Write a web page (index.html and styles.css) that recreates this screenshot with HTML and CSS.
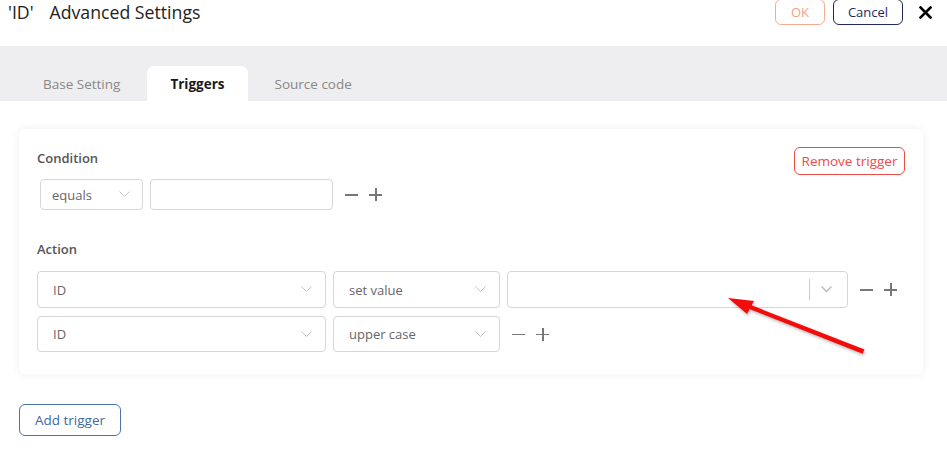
FILE: index.html
```html
<!DOCTYPE html>
<html>
<head>
<meta charset="utf-8">
<link rel="stylesheet" href="styles.css">
</head>
<body>
<header class="header">
  <h1 class="title"><span class="title-id">'ID'</span><span>Advanced Settings</span></h1>
  <div class="header-actions">
    <button class="btn btn-ok">OK</button>
    <button class="btn btn-cancel">Cancel</button>
    <button class="close" aria-label="close">
      <svg width="13" height="13" viewBox="0 0 13 13"><path d="M1.5 1.5 L11.5 11.5 M11.5 1.5 L1.5 11.5" stroke="#000" stroke-width="2.6" stroke-linecap="square"/></svg>
    </button>
  </div>
</header>
<nav class="tabs">
  <div class="tab">Base Setting</div>
  <div class="tab active">Triggers</div>
  <div class="tab">Source code</div>
</nav>
<main class="content">
  <section class="card">
    <div class="card-head">
      <div class="label">Condition</div>
      <button class="btn btn-remove">Remove trigger</button>
    </div>
    <div class="row cond-row">
      <div class="select sel-cond"><span>equals</span><svg class="chev" width="11" height="7" viewBox="0 0 11 7"><path d="M0.5 0.5 L5.5 5.5 L10.5 0.5" fill="none" stroke="#c4c4c4" stroke-width="1"/></svg></div>
      <div class="input inp-cond"></div>
      <div class="pm"><span class="minus"></span><span class="plus"></span></div>
    </div>
    <div class="label action-label">Action</div>
    <div class="rows">
      <div class="row act-row">
        <div class="select sel-field"><span>ID</span><svg class="chev" width="11" height="7" viewBox="0 0 11 7"><path d="M0.5 0.5 L5.5 5.5 L10.5 0.5" fill="none" stroke="#c4c4c4" stroke-width="1"/></svg></div>
        <div class="select sel-op"><span>set value</span><svg class="chev" width="11" height="7" viewBox="0 0 11 7"><path d="M0.5 0.5 L5.5 5.5 L10.5 0.5" fill="none" stroke="#c4c4c4" stroke-width="1"/></svg></div>
        <div class="select sel-value"><span></span><span class="divider"></span><svg class="chev" width="11" height="7" viewBox="0 0 11 7"><path d="M0.5 0.5 L5.5 5.5 L10.5 0.5" fill="none" stroke="#bdbdbd" stroke-width="1.5"/></svg></div>
        <div class="pm"><span class="minus"></span><span class="plus"></span></div>
      </div>
      <div class="row act-row">
        <div class="select sel-field"><span>ID</span><svg class="chev" width="11" height="7" viewBox="0 0 11 7"><path d="M0.5 0.5 L5.5 5.5 L10.5 0.5" fill="none" stroke="#c4c4c4" stroke-width="1"/></svg></div>
        <div class="select sel-op"><span>upper case</span><svg class="chev" width="11" height="7" viewBox="0 0 11 7"><path d="M0.5 0.5 L5.5 5.5 L10.5 0.5" fill="none" stroke="#c4c4c4" stroke-width="1"/></svg></div>
        <div class="pm"><span class="minus"></span><span class="plus"></span></div>
      </div>
    </div>
  </section>
  <button class="btn btn-add">Add trigger</button>
</main>
<svg class="arrow" width="947" height="455" viewBox="0 0 947 455">
  <defs>
    <filter id="sh" x="-20%" y="-20%" width="140%" height="140%">
      <feDropShadow dx="1" dy="2" stdDeviation="1.5" flood-color="#000" flood-opacity="0.25"/>
    </filter>
  </defs>
  <g filter="url(#sh)" fill="#f20f0f" stroke="none">
    <path d="M864.5 349.5 L747 303.5 L745.5 307.5 L862.5 353.8 Z"/>
    <path d="M728 298 L754 301 L747 314 Z"/>
  </g>
</svg>
</body>
</html>
```
FILE: styles.css
```css
* { box-sizing: border-box; }
html, body { margin: 0; padding: 0; }
body {
  width: 947px;
  height: 455px;
  overflow: hidden;
  background: #fff;
  font-family: "Open Sans", "Noto Sans", sans-serif;
  color: #333;
  position: relative;
}
button { font-family: inherit; cursor: pointer; background: #fff; }

.header {
  height: 46px;
  display: flex;
  justify-content: space-between;
  align-items: flex-start;
  padding: 0 15px 0 8px;
}
.title {
  margin: 0;
  font-size: 17.7px;
  font-weight: 400;
  color: #222;
  line-height: 24px;
  display: flex;
  gap: 16px;
}
.header-actions {
  display: flex;
  align-items: center;
  gap: 8px;
  margin-top: -1px;
}
.btn {
  border: 1px solid;
  border-radius: 6px;
  font-size: 13px;
  padding: 0;
}
.btn-ok {
  width: 50px; height: 26px;
  border-color: #f8ab90;
  color: #f7a084;
}
.btn-cancel {
  width: 70px; height: 26px;
  border-color: #1e2a5c;
  color: #1e2a5c;
}
.close {
  border: 0;
  padding: 0;
  margin-left: 7px;
  width: 14px; height: 14px;
  display: flex; align-items: center; justify-content: center;
}

.tabs {
  height: 55px;
  background: #eeeef0;
  display: flex;
  align-items: flex-end;
  padding-left: 18px;
  gap: 2px;
}
.tab {
  height: 35px;
  padding: 0 25px;
  display: flex;
  align-items: center;
  font-size: 13.5px;
  color: #888;
  border-radius: 7px 7px 0 0;
}
.tab.active {
  background: #fff;
  color: #1a1a1a;
  font-weight: 700;
  padding: 0 23px;
}

.content {
  padding: 28px 24px 0 19px;
}
.card {
  background: #fff;
  border-radius: 6px;
  box-shadow: 0 0 10px rgba(0,0,0,0.07);
  padding: 18px 18px 22px 18px;
}
.card-head {
  display: flex;
  justify-content: space-between;
  align-items: flex-start;
}
.label {
  font-size: 13px;
  font-weight: 600;
  color: #555;
  line-height: 18px;
  padding-top: 2px;
}
.btn-remove {
  height: 28px;
  width: 111px;
  border-color: #ef4b45;
  color: #ef4b45;
  font-size: 13.5px;
}
.row {
  display: flex;
  align-items: center;
  gap: 7px;
}
.cond-row {
  margin-top: 4px;
  padding-left: 3px;
}
.select, .input {
  border: 1px solid #d6d6d6;
  border-radius: 4px;
  background: #fff;
  display: flex;
  align-items: center;
  font-size: 13px;
  color: #666;
}
.select { justify-content: space-between; }
.sel-cond {
  width: 103px; height: 31px;
  padding: 0 12px 0 11px;
}
.inp-cond { width: 183px; height: 31px; }
.pm {
  display: flex;
  align-items: center;
  gap: 11px;
  margin-left: 5px;
}
.minus, .plus {
  width: 13px; height: 13px;
  position: relative;
  display: block;
}
.minus::before, .plus::before, .plus::after {
  content: "";
  position: absolute;
  background: #777;
}
.minus::before, .plus::before {
  left: 0; right: 0; top: 6px; height: 1.5px;
}
.plus::after {
  top: 0; bottom: 0; left: 6px; width: 1.5px;
}
.action-label {
  margin-top: 28px;
}
.rows {
  margin-top: 13px;
  display: flex;
  flex-direction: column;
  gap: 8px;
}
.act-row .select { height: 37px; }
.act-row + .act-row .select { height: 36px; }
.sel-field { width: 289px; padding: 0 13px 0 15px; }
.sel-op { width: 167px; padding: 0 13px 0 15px; }
.sel-value { width: 341px; padding: 0 15px 0 15px; justify-content: flex-end; gap: 0; }
.sel-value .divider {
  width: 1px; height: 21px;
  background: #ccc;
  margin-right: 11px;
}
.sel-value span:first-child { flex: 1; }

.btn-add {
  margin-top: 30px;
  width: 102px; height: 32px;
  border-color: #4a74a6;
  color: #3e6a9e;
  font-size: 13.5px;
}

.arrow {
  position: absolute;
  left: 0; top: 0;
  pointer-events: none;
}
```
